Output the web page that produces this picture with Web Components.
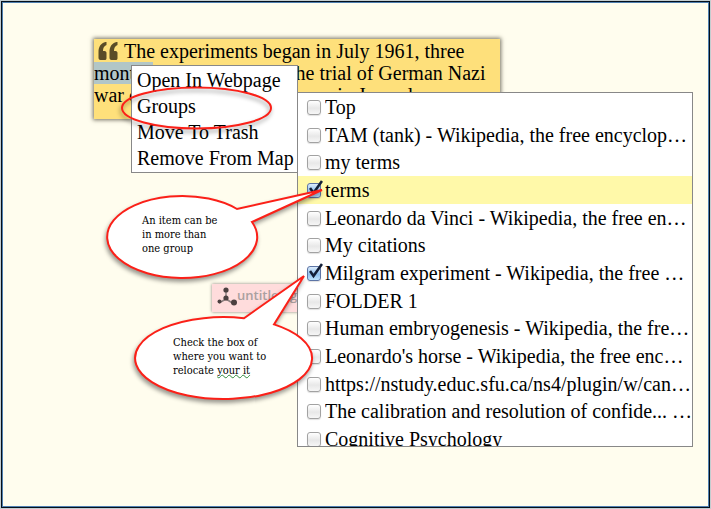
<!DOCTYPE html>
<html lang="en">
<head>
<meta charset="utf-8">
<title>Concept map</title>
<style>
html, body { margin: 0; height: 100%; background: #c4cdd0; }
</style>
</head>
<body>
<map-canvas></map-canvas>
<script>
function define(name, html, setup) {
  const template = document.createElement('template');
  template.innerHTML = html;
  customElements.define(name, class extends HTMLElement {
    constructor() {
      super();
      this.attachShadow({ mode: 'open' }).append(template.content.cloneNode(true));
    }
    connectedCallback() { if (setup) setup(this, this.shadowRoot); }
  });
}

define('quote-note', `
<style>
:host { display: block; box-sizing: border-box; min-height: 80px; background: #fee07b;
  box-shadow: 0 0 4px 1px rgba(70,66,50,.75); font-size: 20px; line-height: 22px; white-space: nowrap; overflow: hidden; }
p { margin: 0; padding-top: 1px; }
svg { width: 20px; height: 18px; margin: 0 6px 0 4px; vertical-align: -2px; }
::slotted(mark) { background: #b2c6c7; color: inherit; }
</style>
<p><svg viewBox="0 0 20 18" fill="#5a4c27"><path id="q" d="M7.500 0H8.500V3C6 4 5 6 5 9H6.500C8 9 8.500 10 8.500 11V16C8.500 17.500 8 18 6.500 18H2.500C1 18 0.500 17 0.500 15.500V10C0.500 4.500 3 1 7.500 0Z"/><path d="M18.500 0H19.500V3C17 4 16 6 16 9H17.500C19 9 19.500 10 19.500 11V16C19.500 17.500 19 18 17.500 18H13.500C12 18 11.500 17 11.500 15.500V10C11.500 4.500 14 1 18.500 0Z"/></svg><slot></slot></p>`);

define('group-node', `
<style>
:host { display: flex; align-items: flex-start; box-sizing: border-box; min-height: 28px; padding: 3px 5px; background: #ffdcdc;
  box-shadow: 0 0 3px rgba(60,50,50,.6); color: #aaa0a0; font: 600 13px/17px "Open Sans", sans-serif; white-space: nowrap; }
svg { width: 20px; height: 20px; flex: none; }
</style>
<svg viewBox="0 0 20 20" fill="#4c4040"><path d="M9 3v9M9 12l-7 4M9 12l8 5" stroke="#8d8080" stroke-width="1.5"/><circle cx="9" cy="3" r="2.6"/><circle cx="9" cy="11" r="2.6"/><circle cx="2.500" cy="14.500" r="2"/><circle cx="17" cy="15.500" r="3"/></svg>
<slot></slot>`);

define('menu-item', `
<style>
:host { display: block; }
button { display: block; width: 100%; margin: 0; padding: 0 5px; border: 0; background: none; color: #000; text-align: left;
  font: inherit; line-height: 26px; white-space: nowrap; }
</style>
<button type="button" role="menuitem"><slot></slot></button>`);

define('context-menu', `
<style>
:host { display: block; box-sizing: border-box; padding: 1px 0; background: #fff; border: 1px solid #888; font-size: 20px; }
</style>
<slot></slot>`);

define('group-option', `
<style>
:host { display: flex; flex: 1; min-height: 0; align-items: center; background: #fff; }
:host([active]) { background: #fff9a9; }
label { display: flex; align-items: center; gap: 4px; padding-left: 9px; min-width: 0; flex: 1; line-height: 26px; }
.box { position: relative; flex: none; width: 14px; height: 15px; margin-top: 1px; }
input { appearance: none; display: block; box-sizing: border-box; width: 14px; height: 15px; margin: 0; border: 1px solid #a2a2a2;
  border-radius: 3px; background: linear-gradient(#fff, #e8e8e8 55%, #f6f6f6); box-shadow: 0 1px 1px rgba(0,0,0,.12); }
input:checked { border-color: #5d74a5; background: linear-gradient(#dcecfb, #8fc0ef 55%, #bfe4fd); }
svg { display: none; position: absolute; left: 2px; top: -3px; width: 14px; height: 17px; pointer-events: none; }
input:checked + svg { display: block; }
span { flex: 1; min-width: 0; overflow: hidden; white-space: nowrap; }
</style>
<label><div class="box"><input type="checkbox"><svg viewBox="0 0 14 17"><path d="M1 8l3.500 5L13 1" fill="none" stroke="#131f38" stroke-width="2.600"/></svg></div><span><slot></slot></span></label>`,
(host, root) => { root.querySelector('input').checked = host.hasAttribute('checked'); });

define('group-picker', `
<style>
:host { display: block; box-sizing: border-box; height: 355px; background: #fff; border: 1px solid #888; overflow: hidden; font-size: 20px; }
div { display: flex; flex-direction: column; height: 360px; }
</style>
<div role="group" aria-label="Groups"><slot></slot></div>`);

define('call-out', `
<style>
:host { display: block; font: 11px/14px "DejaVu Serif Condensed", "DejaVu Serif", serif; white-space: nowrap; }
</style>
<slot></slot>`);

define('map-canvas', `
<style>
:host { display: block; position: relative; box-sizing: border-box; min-height: 100%; padding: 1px; overflow: hidden;
  font-family: "Liberation Serif", serif; color: #000; }
.frame { position: absolute; inset: 1px; box-sizing: border-box; border: 1px solid #04101c; box-shadow: inset 0 0 0 1px #5080b0; background: #fffdee; }
quote-note, group-node, context-menu, group-picker, call-out, .shapes { position: absolute; }
quote-note { left: 94px; top: 39px; width: 406px; }
group-node { left: 212px; top: 284px; width: 110px; }
context-menu { left: 131px; top: 65px; width: 167px; }
group-picker { left: 297px; top: 92px; width: 396px; }
.shapes { left: 0; top: 0; width: 711px; height: 509px; overflow: visible; pointer-events: none; filter: drop-shadow(-1px 3px 2px rgba(0,0,0,.4)); }
.first { left: 142px; top: 214px; }
.second { left: 173px; top: 336px; }
u { text-decoration: underline wavy #2f8a3c 1px; text-underline-offset: 0; text-decoration-skip-ink: none; }
</style>
<div class="frame"></div>
<quote-note>The experiments began in July 1961, three<br><mark>months</mark> after the start of the trial of German Nazi<br>war criminal Adolf Eichmann in Jerusalem.</quote-note>
<group-node>untitled g</group-node>
<context-menu role="menu">
  <menu-item>Open In Webpage</menu-item>
  <menu-item>Groups</menu-item>
  <menu-item>Move To Trash</menu-item>
  <menu-item>Remove From Map</menu-item>
</context-menu>
<group-picker>
  <group-option>Top</group-option>
  <group-option>TAM (tank) - Wikipedia, the free encyclop…</group-option>
  <group-option>my terms</group-option>
  <group-option checked active>terms</group-option>
  <group-option>Leonardo da Vinci - Wikipedia, the free en…</group-option>
  <group-option>My citations</group-option>
  <group-option checked>Milgram experiment - Wikipedia, the free …</group-option>
  <group-option>FOLDER 1</group-option>
  <group-option>Human embryogenesis - Wikipedia, the fre…</group-option>
  <group-option>Leonardo's horse - Wikipedia, the free enc…</group-option>
  <group-option>https://nstudy.educ.sfu.ca/ns4/plugin/w/can…</group-option>
  <group-option>The calibration and resolution of confide... …</group-option>
  <group-option>Cognitive Psychology</group-option>
</group-picker>
<svg class="shapes" viewBox="0 0 711 509" stroke="#fb2018" stroke-width="2" stroke-linejoin="miter">
  <ellipse cx="196.500" cy="108" rx="74.500" ry="20.500" fill="none"/>
  <path d="M237 209A75 41 0 1 0 252 222L322 190Z" fill="#fff"/>
  <path d="M244 318.200A88.500 41 0 1 0 274 324.400L304 276Z" fill="#fff"/>
</svg>
<call-out class="first">An item can be<br>in more than<br>one group</call-out>
<call-out class="second">Check the box of<br>where you want to<br>relocate <u>your it</u></call-out>`);
</script>
</body>
</html>
